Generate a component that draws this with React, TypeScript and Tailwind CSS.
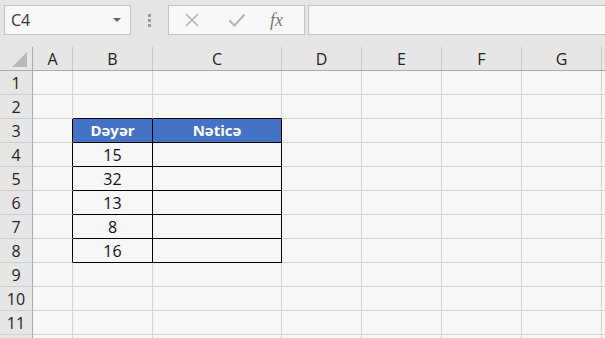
import { Fragment } from 'react'

const cols = [
  { key: 'A', w: 'w-[40px]' },
  { key: 'B', w: 'w-[80px]' },
  { key: 'C', w: 'w-[129px]' },
  { key: 'D', w: 'w-[80px]' },
  { key: 'E', w: 'w-[80px]' },
  { key: 'F', w: 'w-[80px]' },
  { key: 'G', w: 'w-[80px]' },
  { key: 'H', w: 'w-[80px]' },
]

const values: Record<number, string> = { 4: '15', 5: '32', 6: '13', 7: '8', 8: '16' }

const rows = [1, 2, 3, 4, 5, 6, 7, 8, 9, 10, 11, 12]

function inTable(r: number, c: string) {
  return r >= 3 && r <= 8 && (c === 'B' || c === 'C')
}

function cellBorder(r: number, c: string) {
  const right = inTable(r, c) || (c === 'A' && r >= 3 && r <= 8) ? 'border-r-black' : 'border-r-[#d4d4d4]'
  const bottom = inTable(r, c) || (r === 2 && (c === 'B' || c === 'C')) ? 'border-b-black' : 'border-b-[#d4d4d4]'
  return `${right} ${bottom}`
}

export default function App() {
  return (
    <div className="w-[605px] h-[338px] overflow-hidden bg-[#e6e6e6] font-['Open_Sans','Liberation_Sans',sans-serif]">
      {/* Formula bar */}
      <div className="h-[47px] flex items-start pt-[5px] pl-[4px]">
        <div className="w-[127px] h-[30px] bg-[#f8f8f8] border border-[#c4c4c4] flex items-center justify-between pl-[6px] pr-[9px]">
          <span className="text-[16px] text-[#333] leading-none">C4</span>
          <span className="w-0 h-0 border-l-[4px] border-r-[4px] border-t-[4px] border-l-transparent border-r-transparent border-t-[#666]" />
        </div>
        <div className="w-[37px] h-[30px] flex flex-col items-center justify-center gap-[2px]">
          <span className="w-[3px] h-[3px] bg-[#9a9a9a]" />
          <span className="w-[3px] h-[3px] bg-[#9a9a9a]" />
          <span className="w-[3px] h-[3px] bg-[#9a9a9a]" />
        </div>
        <div className="w-[137px] h-[30px] bg-[#f8f8f8] border border-[#c4c4c4] flex items-center">
          <svg width="16" height="16" viewBox="0 0 16 16" className="ml-[15px]">
            <path d="M2 2L14 14M14 2L2 14" stroke="#b4b4b4" strokeWidth="1.6" />
          </svg>
          <svg width="18" height="16" viewBox="0 0 18 16" className="ml-[28px]">
            <path d="M1.5 8.5L6.5 13.5L16.5 2.5" stroke="#b4b4b4" strokeWidth="2" fill="none" />
          </svg>
          <span className="ml-[24px] text-[18px] italic text-[#777] font-['Liberation_Serif',serif] leading-none">fx</span>
        </div>
        <div className="ml-[3px] flex-1 h-[30px] bg-[#f8f8f8] border border-[#c4c4c4] border-r-0" />
      </div>

      {/* Column headers */}
      <div className="flex h-[24px] border-b border-b-[#ababab]">
        <div className="w-[33px] shrink-0 border-r border-r-[#ababab] flex items-end pl-[12px] pb-[3px]">
          <svg width="15" height="15" viewBox="0 0 15 15">
            <polygon points="15,0 15,15 0,15" fill="#b8b8b8" />
          </svg>
        </div>
        {cols.map((c) => (
          <div
            key={c.key}
            className={`${c.w} shrink-0 border-r border-r-[#c8c8c8] flex items-center justify-center text-[16px] text-[#222]`}
          >
            {c.key !== 'H' ? c.key : ''}
          </div>
        ))}
      </div>

      {/* Grid */}
      <div className="bg-[#f7f7f7]">
        {rows.map((r) => (
          <div key={r} className="flex h-[24px]">
            <div className="w-[33px] shrink-0 bg-[#e6e6e6] border-r border-r-[#ababab] border-b border-b-[#cfcfcf] flex items-center justify-center text-[16px] text-[#222]">
              {r < 12 ? r : ''}
            </div>
            {cols.map((c) => {
              const header = r === 3 && inTable(r, c.key)
              return (
                <Fragment key={c.key}>
                  <div
                    className={`${c.w} shrink-0 border-r border-b ${cellBorder(r, c.key)} ${header ? 'bg-[#4472c4] text-white font-bold text-[15px]' : 'text-[#111] text-[16px]'} flex items-center justify-center`}
                  >
                    {header && c.key === 'B' ? 'Dəyər' : ''}
                    {header && c.key === 'C' ? 'Nəticə' : ''}
                    {!header && c.key === 'B' ? values[r] ?? '' : ''}
                  </div>
                </Fragment>
              )
            })}
          </div>
        ))}
      </div>
    </div>
  )
}
